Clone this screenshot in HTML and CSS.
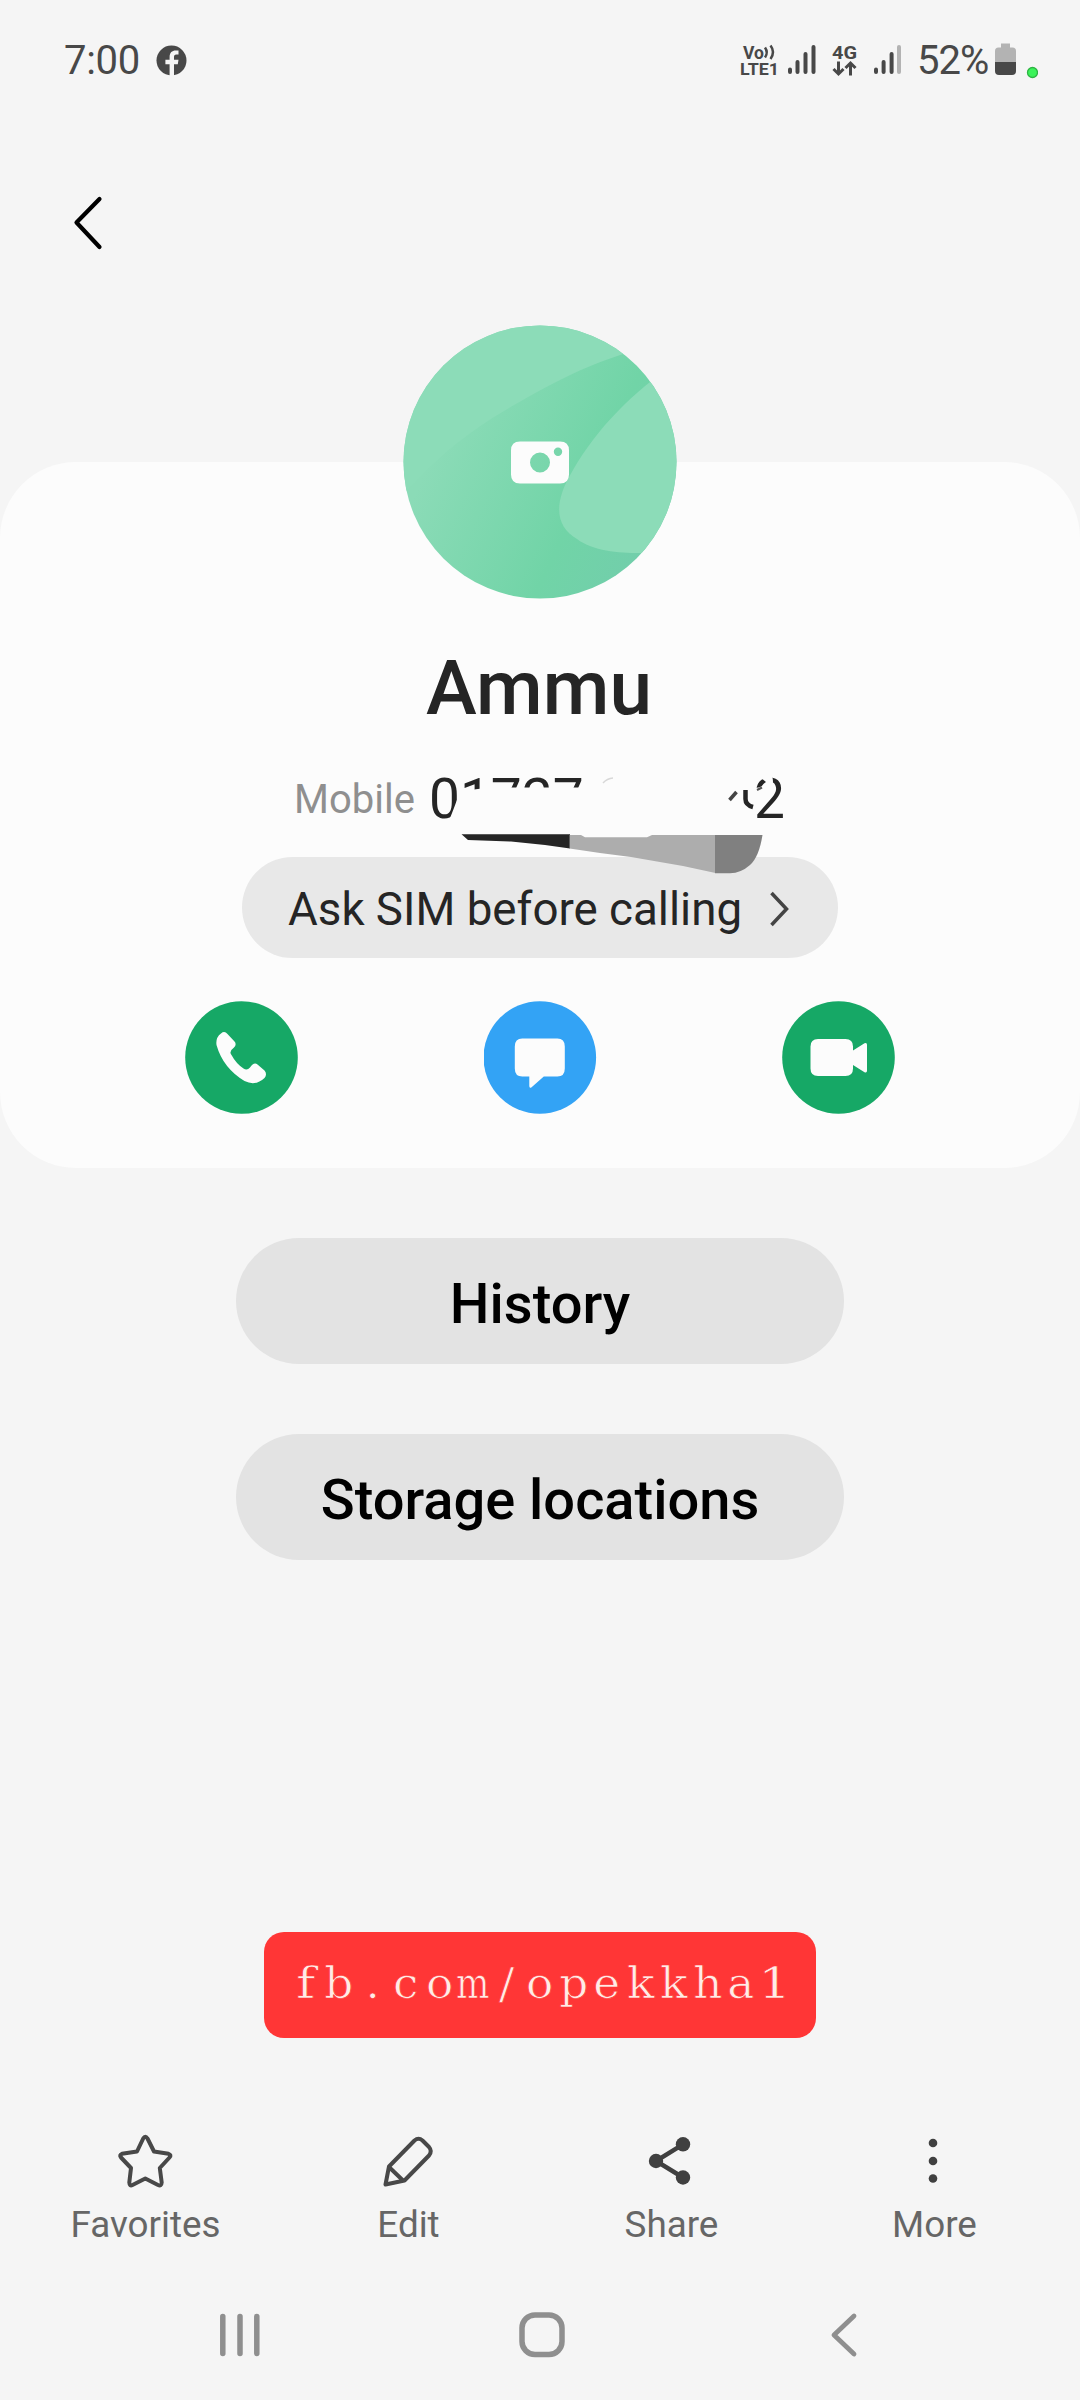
FILE: index.html
```html
<!DOCTYPE html>
<html lang="en">
<head>
<meta charset="utf-8">
<title>Ammu</title>
<link rel="stylesheet" href="styles.css">
</head>
<body>
<div class="status">
  <span class="clock">7:00</span>
  <svg class="fb" width="31" height="31" viewBox="0 0 31 31"><circle cx="15.5" cy="15.5" r="15" fill="#484848"/><path d="M13.600 31V19.300H9.400v-4.500h4.200v-2.600c0-4.600 2.500-6.600 6-6.600h2.900v4h-2.200c-1.700 0-2.300.900-2.300 2.400v2.800h4.500l-.7 4.500h-3.800V31z" fill="#f5f5f5"/></svg>
  <div class="indicators">
    <svg width="170" height="40" viewBox="738 41 170 40" fill="#484848">
      <text x="743" y="59.500" class="tiny vo" textLength="21" lengthAdjust="spacingAndGlyphs">Vo</text>
      <path d="M765 48.500q3.500 5 0 10M770.500 46.500q5 6.500 0 13.500" fill="none" stroke="#484848" stroke-width="2.500"/>
      <text x="740" y="76" class="tiny" textLength="39" lengthAdjust="spacingAndGlyphs">LTE1</text>
      <g stroke="#484848" stroke-width="4" stroke-linecap="round"><path d="M790 70.500v2.500M797.500 63v10M805.500 55v18M813.500 48v25"/><path d="M876 70.500v2.500M883.600 63v10M891.600 55v18"/><path d="M899 48v25" stroke="#b3b3b3"/></g>
      <text x="832" y="59.500" class="tiny big" textLength="25" lengthAdjust="spacingAndGlyphs">4G</text>
      <path d="M838.500 62.500v12M833.500 70l5 5 5-5M850.500 76.500v-12M845.500 69l5-5 5 5" fill="none" stroke="#484848" stroke-width="3"/>
    </svg>
    <span class="percent">52%</span>
    <svg class="battery" width="43" height="40" viewBox="995 41 43 40"><path d="M1001 44.500h9v4h2.500q3.500 0 3.500 3.500v11h-21V52q0-3.500 3.500-3.500h2.500z" fill="#b3b3b3"/><path d="M995 63h21v9q0 4-4 4h-13q-4 0-4-4z" fill="#484848"/><circle cx="1032.500" cy="73.500" r="5" fill="#3cf35a" stroke="#2eb443" stroke-width="1.300"/></svg>
  </div>
</div>
<header class="header">
  <svg width="40" height="60" viewBox="68 193 40 60"><path d="M99.500 199L76.500 222.500 99.500 247" fill="none" stroke="#000" stroke-width="4.200" stroke-linecap="round" stroke-linejoin="round"/></svg>
</header>
<main class="card">
  <svg class="avatar" width="274" height="274" viewBox="0 0 274 274">
    <defs>
      <linearGradient id="mid" x1="40" y1="110" x2="250" y2="210" gradientUnits="userSpaceOnUse"><stop offset="0" stop-color="#8bdbb7"/><stop offset=".65" stop-color="#71d4a7"/><stop offset="1" stop-color="#72ceab"/></linearGradient>
      <clipPath id="round"><circle cx="137" cy="137" r="136.500"/></clipPath>
    </defs>
    <g clip-path="url(#round)">
      <rect width="274" height="274" fill="url(#mid)"/>
      <path d="M0 0H274L230 26C185 39 150 58 120 75C75 100 40 125 0 170z" fill="#8cdcb8"/>
      <path d="M274 37C230 67 195 102 170 145C150 178 152 201 174 214C190 226 215 228 237 228L274 228z" fill="#8cdcb8"/>
    </g>
    <path fill-rule="evenodd" d="M117 116.500h40q9 0 9 9v24q0 9-9 9h-40q-9 0-9-9v-24q0-9 9-9zM137 127.500a10 10 0 1 0 0 20 10 10 0 1 0 0-20zM155 122.500a4.200 4.200 0 1 0 0 8.400 4.200 4.200 0 1 0 0-8.400z" fill="#fcfcfc"/>
  </svg>
  <h1 class="name">Ammu</h1>
  <div class="phone">
    <span class="kind">Mobile</span>
    <span class="digits"><span>01727</span><span>2</span></span>
    <svg class="eraser" width="352" height="110" viewBox="440 767 352 110">
      <path d="M459 794Q475 787 500 787.500H620V773H751V788Q762 789 766 782L752 771 772 776Q777 790 757 812L752 823H448Q455 806 459 794z" fill="#fcfcfc"/>
      <path d="M603 783q4-4.500 10-5" fill="none" stroke="#d8d8d8" stroke-width="1.500"/>
      <path d="M729.500 800l7-8" stroke="#444" stroke-width="3.500"/>
      <path d="M745.500 790v9q0 6 7.500 8" fill="none" stroke="#252525" stroke-width="4.500"/>
      <path d="M757 790l5-2.500" stroke="#555" stroke-width="2"/>
      <path d="M461.500 834.300H570V848.500L545 845 511 841.500 468 840z" fill="#252525"/>
      <path d="M569.600 835H581L585 837.300H647L652 835H715.500V873L683 866 631 857 600 853 569.600 848.500z" fill="#adadad"/>
      <path d="M715 835H762.500Q759 857 750 865 741 873 730 873.300H715z" fill="#808080"/>
    </svg>
  </div>
  <div class="sim"><span>Ask SIM before calling</span><svg width="24" height="40" viewBox="768 887 24 40"><path d="M771.500 891l15 16-15 16" fill="none" stroke="#444" stroke-width="3.500"/></svg></div>
  <div class="actions">
    <svg width="113" height="113" viewBox="0 0 113 113"><circle cx="56.500" cy="56.500" r="56.300" fill="#16a866"/><path d="M36 32.500Q39.500 29.500 42.500 33L49.500 40.500Q52 43.500 49 46.500Q43.500 50.500 46.500 54Q51 62.500 58.500 67.500Q62 70 65 66.500Q69 60.500 72.500 63.500L79.500 69.500Q82.500 73 79.500 77Q70.500 85.500 59.500 80Q38 67 31.500 44Q30.500 36.500 36 32.500z" fill="#fcfcfc"/></svg>
    <svg width="113" height="113" viewBox="0.700 0 113 113"><circle cx="56.500" cy="56.500" r="56.300" fill="#33a3f5"/><path d="M39 37.500h35q7.500 0 7.500 8v22q0 8-7.500 8H60.500L48 86.500q-2 1-2-1.500V75.500H39q-7.500 0-7.500-8v-22q0-8 7.500-8z" fill="#fcfcfc"/></svg>
    <svg width="113" height="113" viewBox="0 0 113 113"><circle cx="56.500" cy="56.500" r="56.300" fill="#16a866"/><path d="M36 38h27.500q7.500 0 7.500 7.500v4l11.500-7.300q2.500-1 2.500 1.500v26q0 2.500-2.500 1.500L71 64v3.500q0 7.500-7.500 7.500H36q-7.500 0-7.500-7.500v-22q0-7.500 7.500-7.500z" fill="#fcfcfc"/></svg>
  </div>
</main>
<div class="links">
  <div class="link">History</div>
  <div class="link">Storage locations</div>
</div>
<div class="promo"><span class="thin">f</span><span>b</span><span>.</span><span>c</span><span>o</span><span class="wide">m</span><span>/</span><span>o</span><span>p</span><span>e</span><span>k</span><span>k</span><span>h</span><span>a</span><span class="thin">1</span></div>
<div class="toolbar">
  <div class="tool"><svg width="60" height="60" viewBox="114 2131 60 60"><path d="M142.200 2138.500Q144.300 2135 146.500 2138.500L153 2151.500 167.500 2153.800Q170.800 2155 168.500 2157.500L158.800 2168 160.700 2182.500Q160.500 2186.500 157 2185L144.300 2178.500 131.500 2185Q128.500 2186.500 128.300 2182.500L130 2168 120 2157.500Q118 2155 121 2153.800L136 2151.500z" fill="none" stroke="#484848" stroke-width="4" stroke-linejoin="round"/></svg><span>Favorites</span></div>
  <div class="tool"><svg width="60" height="60" viewBox="379 2131 60 60"><path d="M415.500 2140.500Q419.500 2137 423.500 2140.500L430 2147Q433.500 2151 430 2155.500L405.500 2180.500 386.500 2184.500 390 2166.500zM390.500 2167.500L404 2180.500" fill="none" stroke="#484848" stroke-width="4" stroke-linejoin="round"/></svg><span>Edit</span></div>
  <div class="tool"><svg width="60" height="60" viewBox="641 2131 60 60"><path d="M683 2144.300L656 2161l27 16.500" fill="none" stroke="#404040" stroke-width="4.500"/><g fill="#404040"><circle cx="683" cy="2144.300" r="7.200"/><circle cx="656" cy="2161" r="7.200"/><circle cx="683" cy="2177.500" r="7.200"/></g></svg><span>Share</span></div>
  <div class="tool"><svg width="60" height="60" viewBox="904 2131 60 60" fill="#404040"><circle cx="933" cy="2143" r="4.300"/><circle cx="933" cy="2161" r="4.300"/><circle cx="933" cy="2178.500" r="4.300"/></svg><span>More</span></div>
</div>
<nav class="nav">
  <svg width="50" height="50" viewBox="215 2310 50 50"><path d="M222.800 2316.500v37M240 2316.500v37M256.800 2316.500v37" stroke="#8f8f8f" stroke-width="5.500" stroke-linecap="round"/></svg>
  <svg width="50" height="50" viewBox="517 2310 50 50"><rect x="522" y="2315" width="40" height="39.500" rx="13" fill="none" stroke="#8f8f8f" stroke-width="5.500"/></svg>
  <svg width="50" height="50" viewBox="819 2310 50 50"><path d="M854 2316L834 2335l20 19" fill="none" stroke="#8f8f8f" stroke-width="4.800" stroke-linecap="round" stroke-linejoin="round"/></svg>
</nav>
</body>
</html>
```
FILE: styles.css
```css
* { box-sizing: border-box; }
body {
  margin: 0;
  width: 1080px;
  height: 2400px;
  overflow: hidden;
  background: #f5f5f5;
  font-family: Roboto, sans-serif;
  display: flex;
  flex-direction: column;
}
svg { display: block; flex: none; }
.status {
  height: 120px;
  flex: none;
  display: flex;
  align-items: center;
  padding: 0 42px 0 64px;
  font-size: 40px;
  color: #484848;
}
.clock { width: 92px; letter-spacing: -0.3px; }
.indicators { margin-left: auto; display: flex; align-items: center; }
.percent { width: 78px; margin-left: 9px; letter-spacing: -1px; }
.tiny { font-size: 17px; font-weight: 700; }
.vo { font-size: 18px; }
.big { font-size: 19px; }
.header { height: 342px; flex: none; padding: 73px 68px 0; }
.card {
  height: 706px;
  flex: none;
  background: #fcfcfc;
  border-radius: 76px;
  display: flex;
  flex-direction: column;
  align-items: center;
}
.avatar { margin: -137px 1px 0 0; }
.name {
  margin: 43px 2px 0 0;
  font-size: 76.5px;
  font-weight: 500;
  line-height: 92px;
  color: #252525;
}
.phone {
  position: relative;
  width: 494px;
  height: 64px;
  margin-top: 33px;
  display: flex;
  align-items: center;
}
.kind { width: 136px; padding-left: 1px; font-size: 40px; color: #8f8f8f; }
.digits {
  flex: 1;
  display: flex;
  justify-content: space-between;
  padding: 0 2px 0 0;
  font-size: 55px;
  line-height: 64px;
  color: #252525;
}
.eraser { position: absolute; left: 147px; top: 0; }
.sim {
  width: 596px;
  height: 101px;
  margin-top: 26px;
  padding: 3px 46px 0 46px;
  border-radius: 51px;
  background: #e8e8e8;
  display: flex;
  align-items: center;
  justify-content: space-between;
  font-size: 45.7px;
  color: #252525;
}
.actions {
  width: 710px;
  margin-top: 43px;
  display: flex;
  justify-content: space-between;
}
.links {
  margin-top: 70px;
  display: flex;
  flex-direction: column;
  align-items: center;
  gap: 70px;
}
.link {
  width: 608px;
  height: 126px;
  padding-top: 5px;
  border-radius: 63px;
  background: #e3e3e3;
  display: flex;
  align-items: center;
  justify-content: center;
  font-size: 56px;
  font-weight: 500;
  color: #000;
}
.promo {
  width: 552px;
  height: 106px;
  flex: none;
  margin: 372px auto 0;
  border-radius: 20px;
  background: #ff3636;
  color: #ffece6;
  font-family: "DejaVu Serif", serif;
  font-size: 42px;
  line-height: 104px;
  -webkit-text-stroke: 0.7px #ff3636;
  display: flex;
  justify-content: center;
}
.promo span { width: 33.5px; display: flex; justify-content: center; transform: scaleX(1.08); }
.promo .wide { transform: scaleX(0.84); }
.promo .thin { transform: scaleX(1.25); }
.toolbar {
  margin: 93px 14px 0 14px;
  display: flex;
}
.tool {
  flex: 1;
  display: flex;
  flex-direction: column;
  align-items: center;
  gap: 12px;
  font-size: 36.8px;
  line-height: 44px;
  color: #666;
}
.tool svg { margin-right: 2px; }
.nav {
  margin: 63px 211px 0 215px;
  display: flex;
  justify-content: space-between;
}
```
